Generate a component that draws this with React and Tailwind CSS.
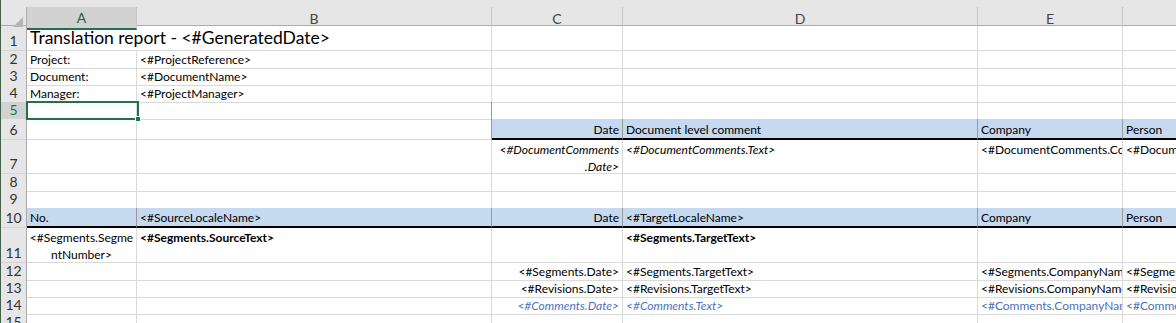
const COLS = "grid grid-cols-[26px_110px_355px_131px_355px_145px_170px]";
const FONT = { fontFamily: "Lato, 'Liberation Sans', sans-serif" };

const Cell = ({ children, className = "" }) => (
  <div className={`flex border-r border-b border-[#dadada] overflow-hidden whitespace-nowrap px-[3px] text-[12px] leading-[16px] ${className}`}>
    {children}
  </div>
);

const Head = ({ children, className = "" }) => (
  <Cell className={`bg-[#c5d9f1] border-r-[#9a9a9a] border-b-2 border-b-black items-end ${className}`}>{children}</Cell>
);

const RowNum = ({ n, active }) => (
  <div
    className={`flex items-end justify-center pb-[1px] border-r border-b border-r-[#ababab] border-b-[#d4d4d4] text-[14px] leading-[16px] ${
      active ? "bg-[#d2d2d2] text-[#217346]" : "bg-[#e6e6e6] text-[#333]"
    }`}
  >
    {n}
  </div>
);

const Lines = ({ lines, className = "" }) => (
  <div className={`flex flex-col w-full leading-[17px] pt-[1px] ${className}`}>
    {lines.map((l, i) => (
      <span key={i}>{l}</span>
    ))}
  </div>
);

const ColHeader = () => {
  const letters = ["A", "B", "C", "D", "E", "F"];
  return (
    <div className={`${COLS} h-[26px] bg-[#e6e6e6] border-b border-[#ababab]`}>
      <div className="relative border-r border-[#ababab] mt-[7px]">
        <div className="absolute right-[3px] bottom-[3px] w-0 h-0 border-l-[10px] border-l-transparent border-b-[10px] border-b-[#b5b5b5]"></div>
      </div>
      {letters.map((l) => (
        <div
          key={l}
          className={`mt-[7px] flex items-center justify-center text-[14px] border-r border-[#c6c6c6] ${
            l === "A" ? "bg-[#d2d2d2] text-[#1e5e3a] border-b-2 border-b-[#217346]" : "text-[#444]"
          }`}
        >
          {l}
        </div>
      ))}
    </div>
  );
};

export default function App() {
  const dark = "border-b-[#9a9a9a]";
  const blue = "text-[#4a72bd]";
  return (
    <div className="relative w-[1176px] h-[323px] overflow-hidden bg-white text-black border-l border-[#44604c]" style={FONT}>
      <ColHeader />

      {/* 1 */}
      <div className={`${COLS} h-[25px]`}>
        <RowNum n="1" />
        <Cell className="col-span-2 items-end text-[17.5px] leading-[22px] pb-[1px]">Translation report - &lt;#GeneratedDate&gt;</Cell>
        <Cell />
        <Cell />
        <Cell />
        <Cell />
      </div>

      {[
        ["2", "Project:", "<#ProjectReference>"],
        ["3", "Document:", "<#DocumentName>"],
        ["4", "Manager:", "<#ProjectManager>"],
      ].map(([n, a, b]) => (
        <div key={n} className={`${COLS} h-[17px]`}>
          <RowNum n={n} />
          <Cell className="items-end">{a}</Cell>
          <Cell className="items-end">{b}</Cell>
          <Cell />
          <Cell />
          <Cell />
          <Cell />
        </div>
      ))}

      {/* 5 */}
      <div className={`${COLS} h-[17px]`}>
        <RowNum n="5" active />
        <Cell />
        <Cell className="border-r-[#9a9a9a]" />
        <Cell className={dark} />
        <Cell className={dark} />
        <Cell className={dark} />
        <Cell className={dark} />
      </div>

      {/* 6 */}
      <div className={`${COLS} h-[21px]`}>
        <RowNum n="6" />
        <Cell />
        <Cell className="border-r-[#9a9a9a]" />
        <Head className="justify-end">Date</Head>
        <Head>Document level comment</Head>
        <Head>Company</Head>
        <Head>Person</Head>
      </div>

      {/* 7 */}
      <div className={`${COLS} h-[34px]`}>
        <RowNum n="7" />
        <Cell />
        <Cell />
        <Cell className="items-start italic">
          <Lines className="items-end" lines={["<#DocumentComments", ".Date>"]} />
        </Cell>
        <Cell className="items-start italic pt-[1px] leading-[17px]">&lt;#DocumentComments.Text&gt;</Cell>
        <Cell className="items-start pt-[1px] leading-[17px]">&lt;#DocumentComments.Company&gt;</Cell>
        <Cell className="items-start pt-[1px] leading-[17px]">&lt;#DocumentComments.Person&gt;</Cell>
      </div>

      {/* 8 */}
      <div className={`${COLS} h-[17px]`}>
        <RowNum n="8" />
        <Cell />
        <Cell />
        <Cell />
        <Cell />
        <Cell />
        <Cell />
      </div>

      {/* 9 */}
      <div className={`${COLS} h-[17px]`}>
        <RowNum n="9" />
        <Cell className={dark} />
        <Cell className={dark} />
        <Cell className={dark} />
        <Cell className={dark} />
        <Cell className={dark} />
        <Cell className={dark} />
      </div>

      {/* 10 */}
      <div className={`${COLS} h-[20px]`}>
        <RowNum n="10" />
        <Head>No.</Head>
        <Head>&lt;#SourceLocaleName&gt;</Head>
        <Head className="justify-end">Date</Head>
        <Head>&lt;#TargetLocaleName&gt;</Head>
        <Head>Company</Head>
        <Head>Person</Head>
      </div>

      {/* 11 */}
      <div className={`${COLS} h-[35px]`}>
        <RowNum n="11" />
        <Cell className="items-start">
          <Lines className="items-center" lines={["<#Segments.Segme", "ntNumber>"]} />
        </Cell>
        <Cell className="items-start font-bold pt-[1px] leading-[17px]">&lt;#Segments.SourceText&gt;</Cell>
        <Cell />
        <Cell className="items-start font-bold pt-[1px] leading-[17px]">&lt;#Segments.TargetText&gt;</Cell>
        <Cell />
        <Cell />
      </div>

      {["Segments", "Revisions"].map((k, i) => (
        <div key={k} className={`${COLS} h-[17px]`}>
          <RowNum n={String(12 + i)} />
          <Cell />
          <Cell />
          <Cell className="items-end justify-end">{`<#${k}.Date>`}</Cell>
          <Cell className="items-end">{`<#${k}.TargetText>`}</Cell>
          <Cell className="items-end">{`<#${k}.CompanyName>`}</Cell>
          <Cell className="items-end">{`<#${k}.Person>`}</Cell>
        </div>
      ))}

      {/* 14 */}
      <div className={`${COLS} h-[17px]`}>
        <RowNum n="14" />
        <Cell />
        <Cell />
        <Cell className={`items-end justify-end italic ${blue}`}>&lt;#Comments.Date&gt;</Cell>
        <Cell className={`items-end italic ${blue}`}>&lt;#Comments.Text&gt;</Cell>
        <Cell className={`items-end ${blue}`}>&lt;#Comments.CompanyName&gt;</Cell>
        <Cell className={`items-end ${blue}`}>&lt;#Comments.Person&gt;</Cell>
      </div>

      {/* 15 */}
      <div className={`${COLS} h-[17px]`}>
        <RowNum n="15" />
        <Cell />
        <Cell />
        <Cell />
        <Cell />
        <Cell />
        <Cell />
      </div>

      {/* selected cell A5 */}
      <div className="absolute left-[25px] top-[101px] w-[113px] h-[19px] border-2 border-[#217346]">
        <div className="absolute -right-[4px] -bottom-[4px] w-[6px] h-[6px] bg-[#217346] border border-white"></div>
      </div>
    </div>
  );
}
